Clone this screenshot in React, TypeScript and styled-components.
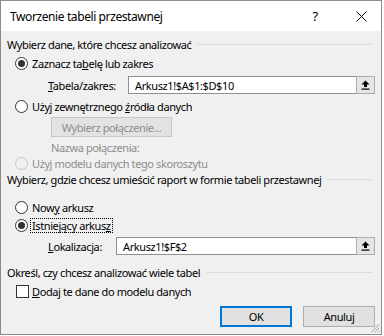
import React from 'react';
import styled, { createGlobalStyle } from 'styled-components';

const GlobalStyle = createGlobalStyle`
  html, body {
    margin: 0;
    padding: 0;
    background: #fff;
  }
  body {
    font-family: 'Noto Sans', 'Liberation Sans', sans-serif;
    font-size: 11px;
    letter-spacing: -0.4px;
    color: #000;
  }
`;

const App: React.FC = () => {
  return (
    <>
      <GlobalStyle />
      <Window>
        <TitleBar>
          <Title>Tworzenie tabeli przestawnej</Title>
          <TitleButton>?</TitleButton>
          <TitleButton>
            <svg width="11" height="11" viewBox="0 0 11 11">
              <path d="M0.5 0.5 L10.5 10.5 M10.5 0.5 L0.5 10.5" stroke="#000" strokeWidth="1" />
            </svg>
          </TitleButton>
        </TitleBar>

        <Content>
          <Heading $mt={5}>Wybierz dane, które chcesz analizować</Heading>
          <OptionRow $mt={2}>
            <Radio $checked />
            <span>
              Zaznacz ta<u>b</u>elę lub zakres
            </span>
          </OptionRow>
          <FieldRow $mt={4}>
            <FieldLabel $width={80}>
              <u>T</u>abela/zakres:
            </FieldLabel>
            <Input>
              <InputText>Arkusz1!$A$1:$D$10</InputText>
              <PickButton>
                <UploadIcon />
              </PickButton>
            </Input>
          </FieldRow>
          <OptionRow $mt={3}>
            <Radio />
            <span>
              Użyj zewnętrznego <u>ź</u>ródła danych
            </span>
          </OptionRow>
          <ConnButton>Wybierz połączenie...</ConnButton>
          <Note>Nazwa połączenia:</Note>
          <OptionRow $h={16} $disabled>
            <Radio $disabled />
            <span>Użyj modelu danych tego skoroszytu</span>
          </OptionRow>

          <Heading>Wybierz, gdzie chcesz umieścić raport w formie tabeli przestawnej</Heading>
          <OptionRow $mt={11}>
            <Radio />
            <span>
              Now<u>y</u> arkusz
            </span>
          </OptionRow>
          <OptionRow>
            <Radio $checked />
            <Focused>
              Istniejący arkus<u>z</u>
            </Focused>
          </OptionRow>
          <FieldRow $mt={3}>
            <FieldLabel $width={68}>
              <u>L</u>okalizacja:
            </FieldLabel>
            <Input>
              <InputText>Arkusz1!$F$2</InputText>
              <PickButton>
                <UploadIcon />
              </PickButton>
            </Input>
          </FieldRow>

          <Heading $mt={9}>Określ, czy chcesz analizować wiele tabel</Heading>
          <CheckRow>
            <CheckBox />
            <span>
              <u>D</u>odaj te dane do modelu danych
            </span>
          </CheckRow>

          <Footer>
            <DialogButton $primary>OK</DialogButton>
            <DialogButton>Anuluj</DialogButton>
          </Footer>
        </Content>

        <Grip>
          <svg width="10" height="10" viewBox="0 0 10 10">
            <path d="M9.5 1 L1 9.5 M9.5 4.5 L4.5 9.5 M9.5 8 L8 9.5" stroke="#a0a0a0" strokeWidth="1" />
          </svg>
        </Grip>
      </Window>
    </>
  );
};

const UploadIcon: React.FC = () => (
  <svg width="9" height="10" viewBox="0 0 9 10">
    <path d="M4.5 0.5 L8.5 4.5 H6 V7 H3 V4.5 H0.5 Z" fill="#000" />
    <rect x="0.5" y="8.5" width="8" height="1.2" fill="#000" />
  </svg>
);

const Window = styled.div`
  position: relative;
  width: 382px;
  height: 335px;
  box-sizing: border-box;
  border: 1px solid #8c8c8c;
  background: #f0f0f0;
  display: flex;
  flex-direction: column;
`;

const TitleBar = styled.div`
  height: 30px;
  background: #fff;
  display: flex;
  align-items: center;
  padding-left: 9px;
  gap: 6px;
  font-size: 12px;
`;

const Title = styled.div`
  flex: 1;
`;

const TitleButton = styled.div`
  width: 40px;
  display: flex;
  justify-content: center;
  align-items: center;
  font-size: 13px;
`;

const Content = styled.div`
  display: flex;
  flex-direction: column;
  padding: 0 6px 7px 6px;
`;

const Heading = styled.div<{ $mt?: number }>`
  display: flex;
  align-items: center;
  gap: 6px;
  height: 16px;
  margin-top: ${(p) => p.$mt ?? 0}px;
  white-space: nowrap;

  &::after {
    content: '';
    flex: 1;
    height: 1px;
    background: #dcdcdc;
    margin-right: 3px;
  }
`;

const OptionRow = styled.div<{ $mt?: number; $h?: number; $disabled?: boolean }>`
  display: flex;
  align-items: center;
  gap: 4px;
  height: ${(p) => p.$h ?? 18}px;
  margin-top: ${(p) => p.$mt ?? 0}px;
  margin-left: 8px;
  color: ${(p) => (p.$disabled ? '#8d8d8d' : '#000')};
`;

const Radio = styled.span<{ $checked?: boolean; $disabled?: boolean }>`
  width: 13px;
  height: 13px;
  box-sizing: border-box;
  border-radius: 50%;
  border: 1px solid ${(p) => (p.$disabled ? '#c4c4c4' : '#333')};
  background: ${(p) => (p.$disabled ? '#f0f0f0' : '#fff')};
  display: flex;
  align-items: center;
  justify-content: center;

  &::after {
    content: '';
    display: ${(p) => (p.$checked ? 'block' : 'none')};
    width: 7px;
    height: 7px;
    border-radius: 50%;
    background: #333;
  }
`;

const Focused = styled.span`
  outline: 1px dotted #000;
  line-height: 13px;
  padding: 0 1px;
  margin-left: -1px;
`;

const FieldRow = styled.div<{ $mt?: number }>`
  display: flex;
  align-items: center;
  height: 18px;
  margin-top: ${(p) => p.$mt ?? 0}px;
  padding-left: 41px;
`;

const FieldLabel = styled.span<{ $width: number }>`
  width: ${(p) => p.$width}px;
  flex-shrink: 0;
`;

const Input = styled.div`
  flex: 1;
  height: 18px;
  box-sizing: border-box;
  border: 1px solid #8f8f8f;
  background: #fff;
  display: flex;
  align-items: center;
`;

const InputText = styled.span`
  flex: 1;
  padding-left: 6px;
`;

const PickButton = styled.span`
  width: 19px;
  height: 18px;
  margin: -1px -1px -1px 0;
  box-sizing: border-box;
  border: 1px solid #adadad;
  background: #e5e5e5;
  display: flex;
  align-items: center;
  justify-content: center;
`;

const ConnButton = styled.div`
  width: 121px;
  height: 20px;
  box-sizing: border-box;
  margin-top: 2px;
  margin-left: 44px;
  border: 1px solid #c6c6c6;
  background: #e3e3e3;
  color: #8d8d8d;
  display: flex;
  align-items: center;
  justify-content: center;
`;

const Note = styled.div`
  height: 14px;
  line-height: 14px;
  margin-top: 4px;
  margin-left: 44px;
  color: #8d8d8d;
`;

const CheckRow = styled.div`
  display: flex;
  align-items: center;
  gap: 3px;
  height: 18px;
  margin-top: 2px;
  margin-left: 9px;
`;

const CheckBox = styled.span`
  width: 13px;
  height: 13px;
  box-sizing: border-box;
  border: 1px solid #333;
  background: #fff;
`;

const Footer = styled.div`
  display: flex;
  justify-content: flex-end;
  gap: 11px;
  margin-top: 6px;
`;

const DialogButton = styled.div<{ $primary?: boolean }>`
  width: 72px;
  height: 21px;
  box-sizing: border-box;
  border: ${(p) => (p.$primary ? '2px solid #0078d7' : '1px solid #adadad')};
  background: #e1e1e1;
  display: flex;
  align-items: center;
  justify-content: center;
`;

const Grip = styled.div`
  position: absolute;
  right: 1px;
  bottom: 1px;
  width: 10px;
  height: 10px;
  display: flex;
`;

export default App;
